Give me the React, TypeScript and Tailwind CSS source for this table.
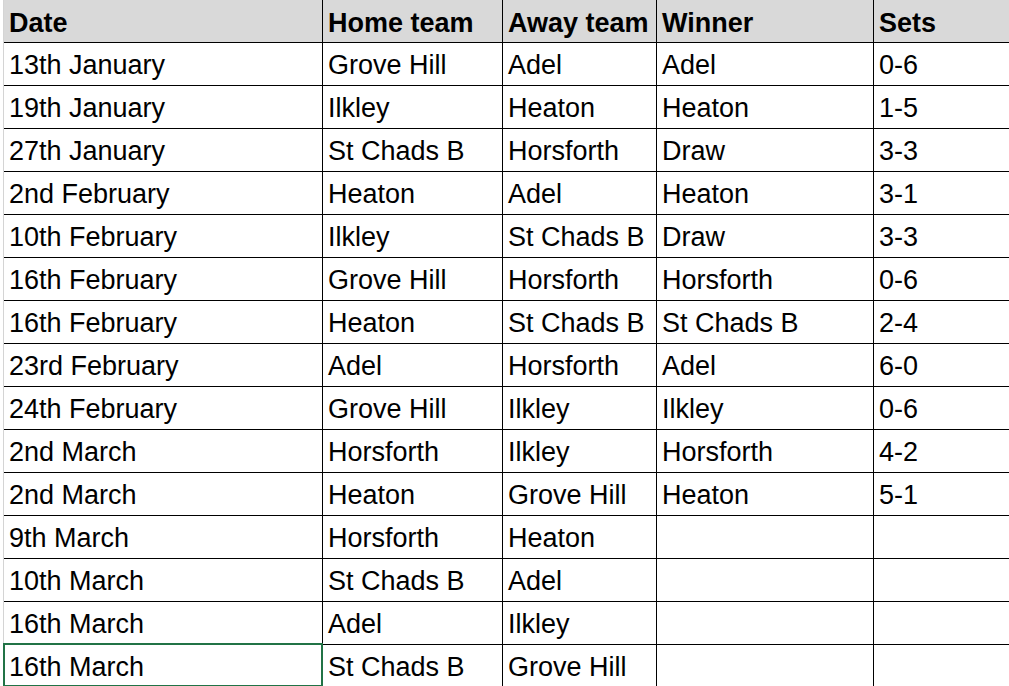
import React from 'react'

const rows = [
  ['13th January', 'Grove Hill', 'Adel', 'Adel', '0-6'],
  ['19th January', 'Ilkley', 'Heaton', 'Heaton', '1-5'],
  ['27th January', 'St Chads B', 'Horsforth', 'Draw', '3-3'],
  ['2nd February', 'Heaton', 'Adel', 'Heaton', '3-1'],
  ['10th February', 'Ilkley', 'St Chads B', 'Draw', '3-3'],
  ['16th February', 'Grove Hill', 'Horsforth', 'Horsforth', '0-6'],
  ['16th February', 'Heaton', 'St Chads B', 'St Chads B', '2-4'],
  ['23rd February', 'Adel', 'Horsforth', 'Adel', '6-0'],
  ['24th February', 'Grove Hill', 'Ilkley', 'Ilkley', '0-6'],
  ['2nd March', 'Horsforth', 'Ilkley', 'Horsforth', '4-2'],
  ['2nd March', 'Heaton', 'Grove Hill', 'Heaton', '5-1'],
  ['9th March', 'Horsforth', 'Heaton', '', ''],
  ['10th March', 'St Chads B', 'Adel', '', ''],
  ['16th March', 'Adel', 'Ilkley', '', ''],
  ['16th March', 'St Chads B', 'Grove Hill', '', ''],
]

const widths = ['w-[319px]', 'w-[180px]', 'w-[154px]', 'w-[217px]', 'flex-1']

const App = () => {
  return (
    <div
      className="w-[1009px] h-[686px] overflow-hidden bg-white pl-[3px] text-black text-[27px]"
      style={{ fontFamily: '"Liberation Sans", Arial, sans-serif' }}
    >
      <div className="border-l border-[#d4d4d4]">
        <div className="flex h-[43px] bg-[#d9d9d9] border-b border-black font-bold">
          {['Date', 'Home team', 'Away team', 'Winner', 'Sets'].map((h, i) => (
            <div
              key={h}
              className={`${widths[i]} ${i < 4 ? 'border-r border-black' : ''} pl-[5px] pt-[4px] leading-[38px] whitespace-nowrap overflow-hidden`}
            >
              {h}
            </div>
          ))}
        </div>
        {rows.map((r, ri) => (
          <div key={ri} className="flex h-[43px] border-b border-black">
            {r.map((c, i) => (
              <div
                key={i}
                className={`${widths[i]} ${i < 4 ? 'border-r border-black' : ''} relative pl-[5px] pt-[2px] leading-[40px] whitespace-nowrap`}
              >
                {c}
                {ri === rows.length - 1 && i === 0 && (
                  <div className="absolute -left-px -top-[2px] -right-px bottom-0 border-2 border-[#217346]"></div>
                )}
              </div>
            ))}
          </div>
        ))}
      </div>
    </div>
  )
}

export default App
